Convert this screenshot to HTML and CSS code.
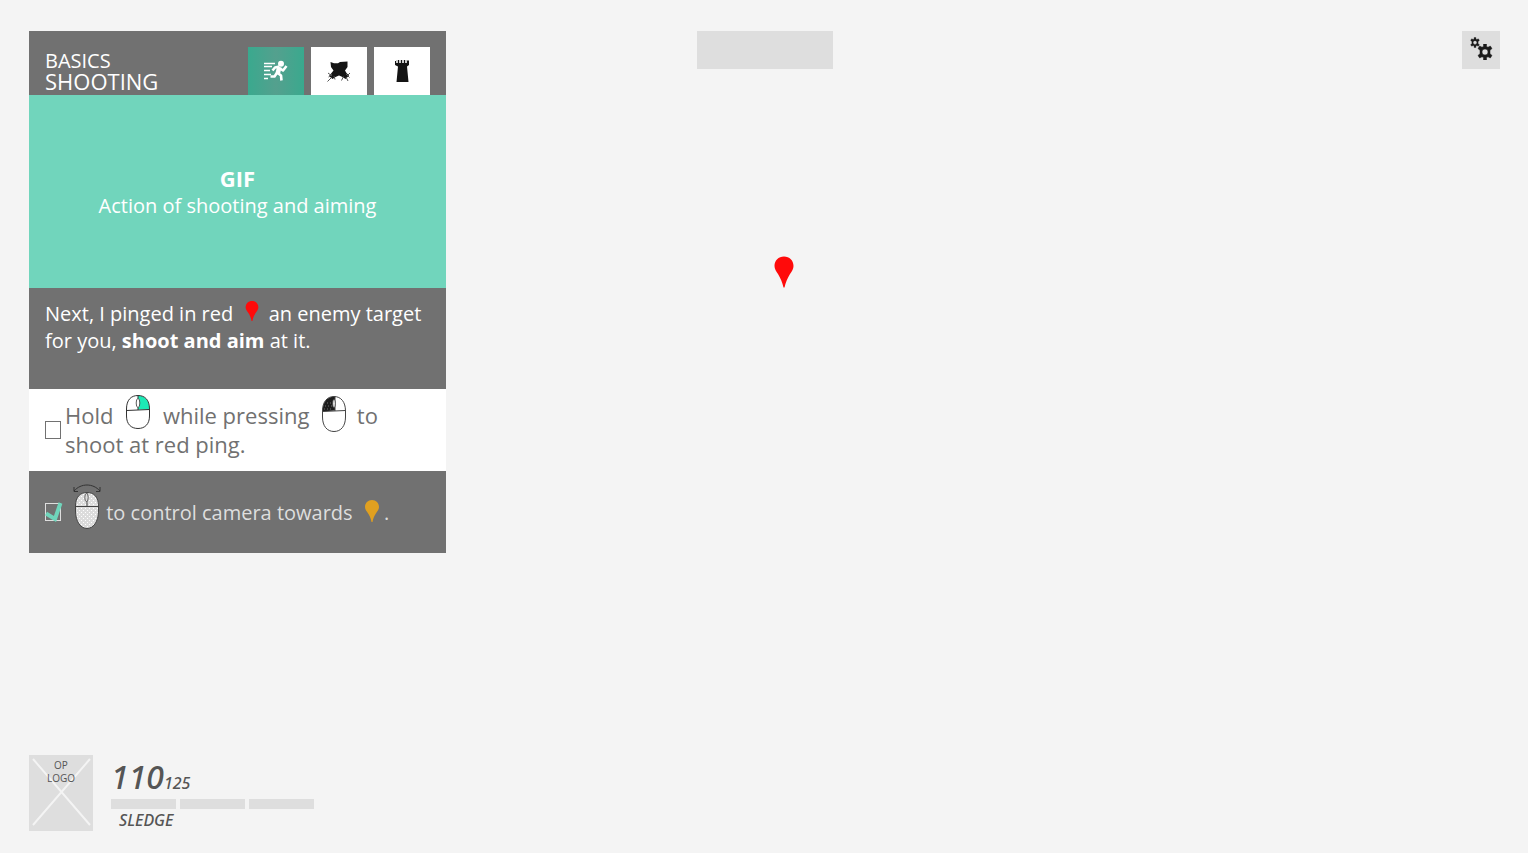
FILE: index.html
```html
<!DOCTYPE html>
<html lang="en">
<head>
    <meta charset="UTF-8">
    <meta name="viewport" content="width=device-width, initial-scale=1.0">
    <title>Basics - Shooting</title>
    <link rel="stylesheet" href="styles.css">
</head>
<body>
    <!-- shared shapes -->
    <svg class="defs" aria-hidden="true">
        <symbol id="pin" viewBox="0 0 20 32">
            <path d="M10 0.5C4.5 0.5 0.5 4.5 0.5 10C0.5 13 2 15 4 18C6.5 22 8.5 27 9.5 31.5H10.5C11.5 27 13.5 22 16 18C18 15 19.5 13 19.5 10C19.5 4.5 15.5 0.5 10 0.5Z" fill="currentColor"/>
        </symbol>
        <symbol id="pin-small" viewBox="0 0 14 22">
            <path d="M7 0C3 0 0 3 0 7C0 9 1 10.5 2.5 12.5C4.500 15.500 6 18.500 6.500 22H7.500C8 18.500 9.500 15.500 11.500 12.500C13 10.500 14 9 14 7C14 3 11 0 7 0Z" fill="currentColor"/>
        </symbol>
        <symbol id="gear" viewBox="0 0 16 16">
            <path d="M6.500 0H9.500V2.500L11 3.200L13.300 2L15 4.600L13 6.200V9.800L15 11.400L13.300 14L11 12.800L9.500 13.500V16H6.500V13.500L5 12.800L2.700 14L1 11.400L3 9.800V6.200L1 4.600L2.700 2L5 3.200L6.500 2.500ZM8 5A3 3 0 1 0 8 11A3 3 0 1 0 8 5Z" fill="#1a1a1a" stroke="#1a1a1a" stroke-width="0.500" fill-rule="evenodd"/>
        </symbol>
    </svg>

    <main class="hud">
        <section class="panel">
            <header class="panel-head">
                <h1 class="title"><span class="chapter">BASICS</span><span class="lesson">SHOOTING</span></h1>
                <nav class="tabs">
                    <button class="tab active" aria-label="Basics">
                        <svg width="24" height="22" viewBox="0 0 24 22">
                            <path d="M0 3.500H11M0 6.500H8M0 10.500H6M0 14.500H7M0 18.500H4" stroke="#fff" stroke-width="1.300"/>
                            <circle cx="17" cy="3.800" r="3" fill="#fff"/>
                            <path d="M15.500 6.500L11 7.500L8.500 10.500M14.500 8L12.500 13.500L10.500 16.500H6.500M13 12.500L17 15.500L17.500 20.500M16 8.500L19 10.500L22.500 6" stroke="#fff" stroke-width="2.600" fill="none" stroke-linejoin="round"/>
                            <path d="M13 6.500L17.500 7.500L16 14L12 14.500Z" fill="#fff"/>
                        </svg>
                    </button>
                    <button class="tab" aria-label="Attack">
                        <svg width="24" height="21" viewBox="0 0 24 21">
                            <path d="M3.500 1L7 2.200H11L13 1L20.500 0.500L20.500 6L18 9.500L19.500 12L22 14.500L18.500 18L15.500 16L12 14.500L8.500 16L5.500 18L2 15L4.500 12L6.500 9.500L4 6Z" fill="#141414"/>
                            <path d="M5 13L1.500 16M7 15L8 18.500M4.500 16.500L0.500 20.500M19 13L22.500 16.500M16.500 15.500L14.500 19.500M19 16L21 20M21 14L23 12M1 12L5 15" stroke="#555" stroke-width="1"/>
                        </svg>
                    </button>
                    <button class="tab" aria-label="Defense">
                        <svg width="14" height="22" viewBox="0 0 14 22">
                            <path d="M0 1H1V3H3V0H4V3H6V0H7V3H9V0H10V3H12V0.500H14V5L12 6.500L13.500 22H1.500L3 6.500L0 5Z" fill="#141414"/>
                            <path d="M2 0V3M5 0V3M8 0V3M11 0V3" stroke="#999"/>
                        </svg>
                    </button>
                </nav>
            </header>

            <div class="preview">
                <strong class="preview-type">GIF</strong>
                <span>Action of shooting and aiming</span>
            </div>

            <p class="message">Next, I pinged in red <svg class="pin pin-red"><use href="#pin-small"/></svg> an enemy target for you, <strong>shoot and aim</strong> at it.</p>

            <div class="task">
                <input type="checkbox" id="shoot">
                <label for="shoot">Hold
                    <svg class="mouse mouse-right" viewBox="0 0 24 34">
                        <path d="M12 0.500C19 0.500 23.500 6 23.500 14.500H12Z" fill="#1de9b6"/>
                        <path d="M0.500 14C0.500 5 5 0.500 12 0.500S23.500 5 23.500 14V21C23.500 29 19 33.500 12 33.500S0.500 29 0.500 21ZM0.500 15.500L23.500 14.500M12 0.500V15" fill="none" stroke="#333"/>
                        <ellipse cx="12" cy="8" rx="1.800" ry="4.500" fill="#fff" stroke="#333" stroke-width="0.800"/>
                    </svg>
                    while pressing
                    <svg class="mouse mouse-left" viewBox="0 0 24 36">
                        <path d="M13 0.500C5 0.500 0.500 6 0.500 15.500L13 14.500Z" fill="#1c1c1c"/>
                        <path d="M3 10H10M2 13H10M5 7H10" stroke="#888" stroke-width="0.800" stroke-dasharray="1 2"/>
                        <path d="M0.500 15C0.500 6 5 0.500 12 0.500S23.500 6 23.500 15V21C23.500 30 19 35.500 12 35.500S0.500 30 0.500 21ZM0.500 15.500L23.500 14.500M13 0.500V15" fill="none" stroke="#444"/>
                        <ellipse cx="12" cy="7.500" rx="1.500" ry="4" fill="#ddd" stroke="#222" stroke-width="0.600"/>
                    </svg>
                    to shoot at red ping.</label>
            </div>

            <div class="task done">
                <span class="check">
                    <input type="checkbox" id="camera" checked>
                    <svg class="tick" viewBox="0 0 18 20"><path d="M1 11.500L10 17L15.500 1" fill="none" stroke="#6fd5bb" stroke-width="4"/></svg>
                </span>
                <label for="camera"><svg class="mouse mouse-move" viewBox="0 0 28 45">
                        <defs>
                            <pattern id="dots" width="4" height="4" patternUnits="userSpaceOnUse">
                                <rect width="4" height="4" fill="#dcdcdc"/>
                                <path d="M0 0.500H1M2 2.500H3" stroke="#fff"/>
                            </pattern>
                        </defs>
                        <path d="M1 7C8 -1 20 -1 27 7M1 3V7.500H5M27 3V7.500H23" fill="none" stroke="#333" stroke-width="1"/>
                        <path d="M2.500 22C2.500 13 7 8.500 14 8.500S25.500 13 25.500 22V27C25.500 38 20 44.500 14 44.500S2.500 38 2.500 27Z" fill="url(#dots)" stroke="#444"/>
                        <path d="M2.500 22.500H25.500M14 9V22" stroke="#444"/>
                        <ellipse cx="13.500" cy="13.500" rx="1.700" ry="4" fill="#ddd" stroke="#444" stroke-width="0.800"/>
                    </svg> to control camera towards <svg class="pin pin-gold"><use href="#pin-small"/></svg> .</label>
            </div>
        </section>

        <div class="compass"></div>

        <button class="settings" aria-label="Settings">
            <svg viewBox="0 0 24 24">
                <use href="#gear" x="1" y="-1" width="10" height="11"/>
                <use href="#gear" x="8" y="6" width="16" height="16"/>
            </svg>
        </button>

        <footer class="operator">
            <div class="logo">
                <svg class="cross" viewBox="0 0 64 76" preserveAspectRatio="none"><path d="M4 4L61 70M61 4L4 70" stroke="#f4f4f4" stroke-width="2"/></svg>
                <span>OP<br>LOGO</span>
            </div>
            <div class="stats">
                <div class="health"><span class="current">110</span><span class="max">125</span></div>
                <div class="bars"><i></i><i></i><i></i></div>
                <div class="name">SLEDGE</div>
            </div>
        </footer>
    </main>

    <!-- enemy ping in the world -->
    <svg class="world-ping"><use href="#pin"/></svg>
</body>
</html>
```

FILE: styles.css
```css
:root {
    --bg: #f4f4f4;
    --slot: #dedede;
    --dark: #717171;
    --mint: #71d5bc;
    --red: #ff0a0a;
    --gold: #e0a020;
}

* {
    box-sizing: border-box;
}

body {
    margin: 0;
    background: var(--bg);
    font-family: "Open Sans", sans-serif;
    font-size: 20px;
    color: #fff;
}

button {
    border: 0;
    padding: 0;
    cursor: pointer;
}

.defs {
    position: absolute;
    width: 0;
    height: 0;
}

.hud {
    min-height: 100vh;
    padding: 31px 28px 22px 29px;
    display: grid;
    grid-template-columns: 1fr auto 1fr;
    grid-template-rows: auto 1fr;
    align-items: start;
}

/* Tutorial panel */
.panel {
    width: 100%;
    max-width: 417px;
    background: var(--dark);
}

.panel-head {
    display: flex;
    justify-content: space-between;
    align-items: flex-end;
    height: 64px;
    padding: 0 16px;
}

.title {
    margin: 0 0 4px;
    font-weight: 400;
    line-height: 20px;
}

.title span {
    display: block;
}

.chapter {
    font-size: 20px;
}

.lesson {
    font-size: 22px;
}

.tabs {
    display: flex;
    gap: 7px;
}

.tab {
    display: flex;
    align-items: center;
    justify-content: center;
    width: 56px;
    height: 48px;
    background: #fff;
}

.tab.active {
    background: linear-gradient(90deg, #3aa98e, #54a08e 50%, #3aa98e);
}

.preview {
    display: flex;
    flex-direction: column;
    align-items: center;
    justify-content: center;
    height: 193px;
    background: var(--mint);
    line-height: 28px;
}

.preview-type {
    font-size: 22px;
}

.message {
    margin: 0;
    min-height: 101px;
    padding: 12px 16px;
    line-height: 27px;
}

.pin {
    overflow: visible;
}

.pin-red {
    width: 14px;
    height: 20px;
    margin: 0 4px 0 7px;
    color: var(--red);
}

.pin-gold {
    width: 14px;
    height: 22px;
    margin: 0 0 0 7px;
    vertical-align: -2px;
    color: var(--gold);
}

/* Tasks */
.task {
    display: flex;
    align-items: center;
    min-height: 82px;
    padding: 0 16px;
    background: #fff;
    color: var(--dark);
    font-size: 22px;
    line-height: 29px;
}

.task input {
    appearance: none;
    flex: none;
    width: 16px;
    height: 18px;
    margin: 0 4px 0 0;
    border: 1px solid var(--dark);
}

.task.done {
    background: var(--dark);
    color: #dedede;
    font-size: 20px;
}

.task.done input {
    display: block;
    border-color: #dedede;
}

.check {
    position: relative;
}

.tick {
    position: absolute;
    left: 0;
    top: -1px;
    width: 18px;
    height: 20px;
    pointer-events: none;
}

.mouse-right {
    width: 24px;
    height: 34px;
    margin: -12px 7px;
    vertical-align: 7px;
}

.mouse-left {
    width: 26px;
    height: 36px;
    margin: -12px 4px -12px 6px;
    vertical-align: 4px;
}

.mouse-move {
    width: 28px;
    height: 45px;
    margin: -16px 0 -12px 8px;
    vertical-align: 3px;
}

/* Top bar slots */
.compass {
    width: 136px;
    height: 38px;
    background: var(--slot);
}

.settings {
    justify-self: end;
    display: flex;
    align-items: center;
    justify-content: center;
    width: 38px;
    height: 38px;
    background: var(--slot);
}

.settings svg {
    width: 24px;
    height: 24px;
    overflow: visible;
}

/* Operator status */
.operator {
    grid-column: 1 / -1;
    align-self: end;
    display: flex;
    gap: 18px;
    color: #555;
}

.logo {
    position: relative;
    width: 64px;
    height: 76px;
    padding-top: 4px;
    background: var(--slot);
    font-size: 10px;
    line-height: 13px;
    text-align: center;
}

.logo span {
    position: relative;
}

.cross {
    position: absolute;
    left: 0;
    top: 0;
    width: 100%;
    height: 100%;
}

.health,
.name {
    font-family: "Noto Sans", sans-serif;
    font-style: italic;
    font-weight: 500;
}

.health {
    height: 44px;
    line-height: 44px;
}

.current {
    font-size: 32px;
}

.max {
    font-size: 16px;
}

.bars {
    display: flex;
    gap: 4px;
}

.bars i {
    width: 65px;
    height: 10px;
    background: var(--slot);
}

.name {
    padding-left: 8px;
    font-size: 16px;
    line-height: 22px;
}

.world-ping {
    position: absolute;
    left: 51.3%;
    top: 256px;
    width: 20px;
    height: 32px;
    transform: translateX(-50%);
    color: var(--red);
}
```
